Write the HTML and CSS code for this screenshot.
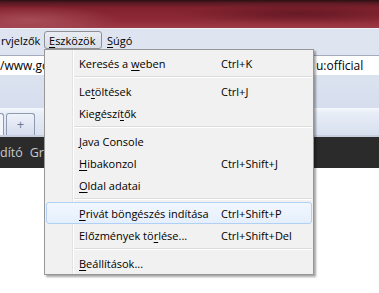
FILE: index.html
```html
<!DOCTYPE html>
<html lang="hu">
<head>
  <meta charset="UTF-8">
  <title>Eszközök menü</title>
  <link rel="stylesheet" href="styles.css">
</head>
<body>
  <div class="window">
    <div class="titlebar"></div>

    <div class="menubar">
      <span class="mb-item mb-cut">rvjelzők</span>
      <span class="mb-item mb-open"><u>E</u>szközök</span>
      <span class="mb-item"><u>S</u>úgó</span>
    </div>

    <div class="navbar">
      <div class="urlbar">
        <span class="url-left">/www.google.hu/search?q=</span>
        <span class="url-right">u:official</span>
      </div>
    </div>

    <div class="tabstrip">
      <div class="tab tab-cut"></div>
      <div class="tab tab-new">+</div>
    </div>

    <div class="bookmarks">
      <span>dító</span>
      <span>Gr</span>
    </div>

    <div class="content"></div>

    <!-- open Eszközök dropdown -->
    <div class="menu">
      <div class="item"><span>Keresés a <u>w</u>eben</span><span>Ctrl+K</span></div>
      <div class="sep"></div>
      <div class="item"><span>Le<u>t</u>öltések</span><span>Ctrl+J</span></div>
      <div class="item"><span>Kiegészí<u>t</u>ők</span><span></span></div>
      <div class="sep"></div>
      <div class="item"><span><u>J</u>ava Console</span><span></span></div>
      <div class="item"><span><u>H</u>ibakonzol</span><span>Ctrl+Shift+J</span></div>
      <div class="item"><span><u>O</u>ldal adatai</span><span></span></div>
      <div class="sep"></div>
      <div class="item hover"><span><u>P</u>rivát böngészés indítása</span><span>Ctrl+Shift+P</span></div>
      <div class="item"><span>Előzmények tö<u>r</u>lése...</span><span>Ctrl+Shift+Del</span></div>
      <div class="sep"></div>
      <div class="item"><span><u>B</u>eállítások...</span><span></span></div>
    </div>
  </div>
</body>
</html>
```

FILE: styles.css
```css
body {
  margin: 0;
  font-family: 'Open Sans', 'Noto Sans', sans-serif;
  font-size: 11px;
  color: #000;
  background: #fff;
}
u {
  text-underline-offset: 2px;
}
.window {
  position: relative;
  width: 379px;
  height: 293px;
  overflow: hidden;
}
.titlebar {
  height: 28px;
  border-bottom: 1px solid #eef1f7;
  background:
    radial-gradient(ellipse 90px 14px at 30px 20px, rgba(190, 110, 120, 0.5), rgba(190, 110, 120, 0)),
    radial-gradient(ellipse 120px 10px at 300px 14px, rgba(60, 10, 20, 0.45), rgba(60, 10, 20, 0)),
    linear-gradient(to bottom, #2a1014 0, #5a1a22 3px, #82222e 8px, #8e2a37 20px, #9c3a46 28px);
}
.menubar {
  height: 21px;
  display: flex;
  align-items: flex-start;
  background: #dfe5f0;
}
.mb-item {
  height: 18px;
  line-height: 17px;
  margin-top: 2px;
  border: 1px solid transparent;
  box-sizing: border-box;
}
.mb-cut {
  width: 44px;
}
.mb-open {
  width: 58px;
  padding-left: 4px;
  border-color: #8f9194;
  border-radius: 3px;
  background: linear-gradient(to bottom, #e9edf3, #d9dfe8);
  margin-right: 4px;
}
.navbar {
  height: 58px;
  padding-top: 5px;
  box-sizing: border-box;
  background: linear-gradient(to bottom, #dfe5f0, #d6deee);
}
.urlbar {
  height: 20px;
  display: flex;
  align-items: center;
  background: #fff;
  border-top: 1px solid #a3abbd;
  box-sizing: border-box;
  font-size: 12px;
}
.url-left {
  width: 316px;
  white-space: nowrap;
  overflow: hidden;
}
.url-right {
  white-space: nowrap;
}
.tabstrip {
  height: 29px;
  display: flex;
  align-items: flex-end;
  gap: 2px;
  background: linear-gradient(to bottom, #f5f7fc 0, #e8edf7 5px, #d8e0ef 100%);
  border-bottom: 2px solid #c7cfdf;
  box-sizing: border-box;
}
.tab {
  height: 22px;
  border: 1px solid #8e9ab2;
  border-bottom: none;
  border-radius: 3px 3px 0 0;
  box-sizing: border-box;
}
.tab-cut {
  width: 4px;
  border-left: none;
  border-radius: 0 3px 0 0;
  background: #f2f5fb;
}
.tab-new {
  width: 29px;
  text-align: center;
  line-height: 20px;
  color: #6d7891;
  font-size: 13px;
  background: linear-gradient(to bottom, #eef2f9, #d5dced);
}
.bookmarks {
  height: 31px;
  display: flex;
  align-items: center;
  gap: 7px;
  background: #2b2b2b;
  color: #c9c9c9;
  font-size: 12.5px;
}
.menu {
  position: absolute;
  left: 44px;
  top: 49px;
  width: 270px;
  padding: 2px 1px 0;
  box-sizing: border-box;
  border: 1px solid #979797;
  background: linear-gradient(to right, #f1f1f1 27px, #e2e3e3 27px, #e2e3e3 28px, #fff 28px, #fff 29px, #f1f1f1 29px);
  box-shadow: 2px 2px 2px rgba(0, 0, 0, 0.35);
}
.item {
  height: 22px;
  display: grid;
  grid-template-columns: 142px auto;
  align-items: center;
  padding-left: 32px;
  border: 1px solid transparent;
  border-radius: 3px;
  box-sizing: border-box;
  white-space: nowrap;
}
.item.hover {
  border-color: #b1d0f5;
  background: linear-gradient(to bottom, #f2f7fe, #e5effc);
}
.sep {
  height: 6px;
  margin-left: 28px;
  background: linear-gradient(to bottom, transparent 2px, #dcdcdc 2px, #dcdcdc 3px, #fff 3px, #fff 4px, transparent 4px);
}
```
